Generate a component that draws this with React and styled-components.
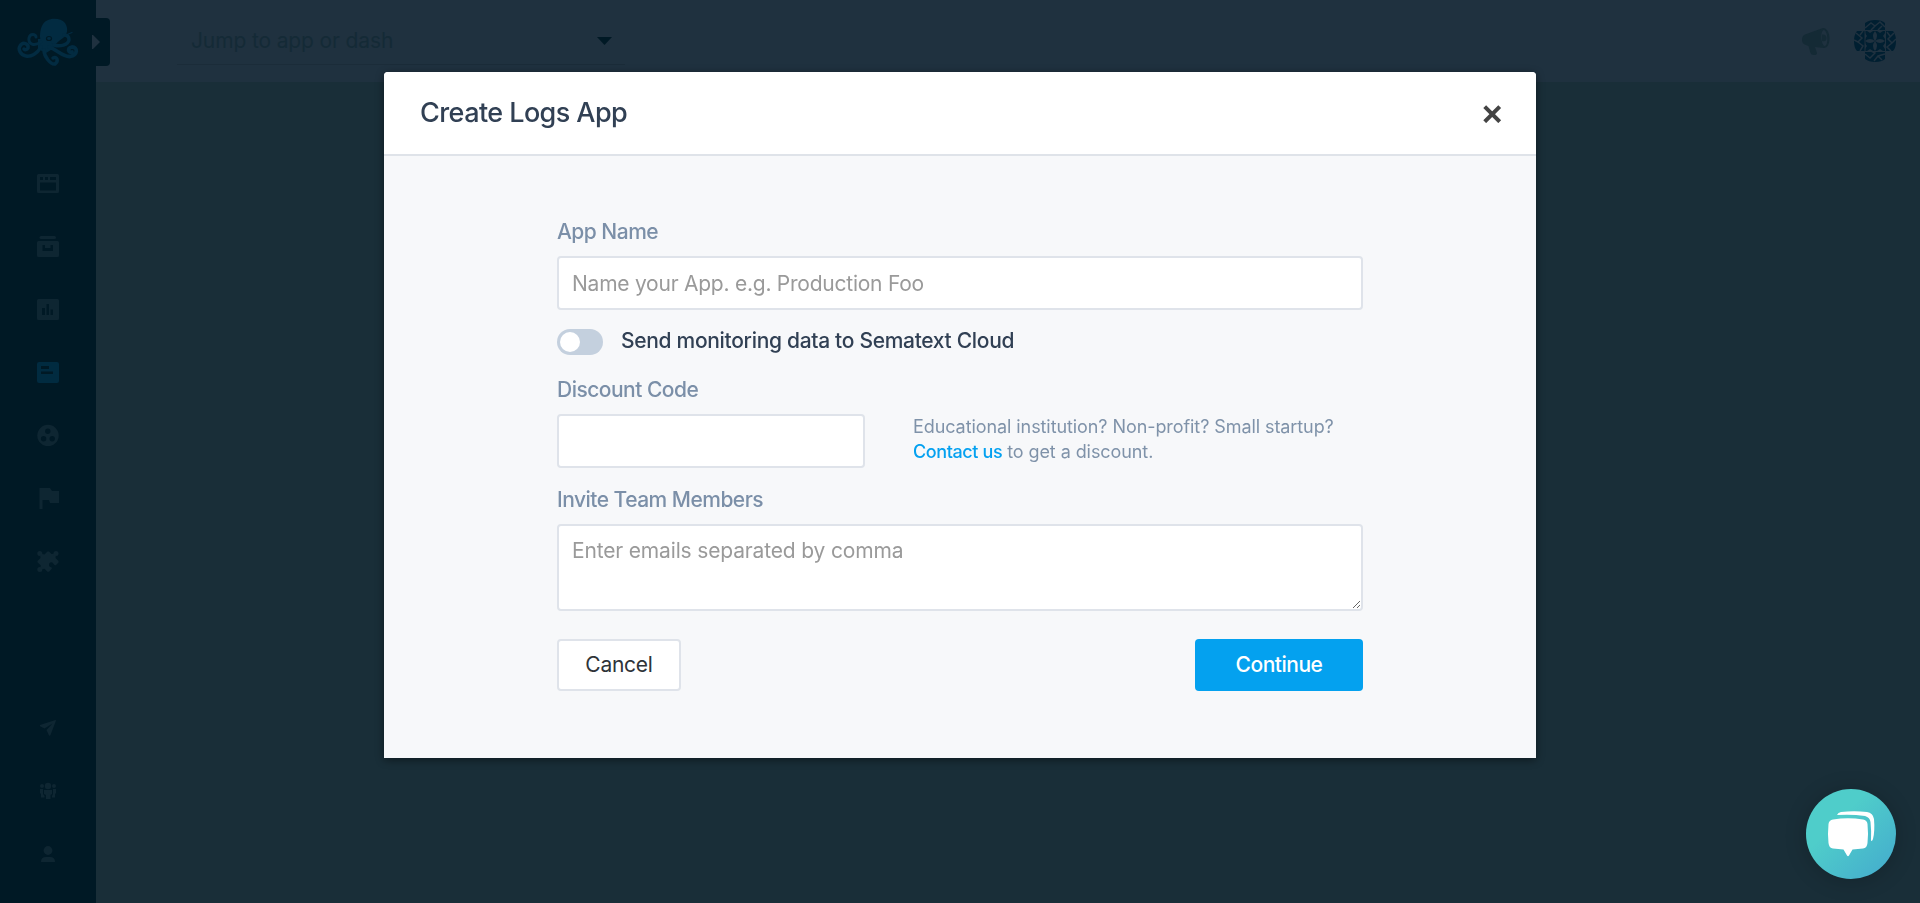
import React from "react";
import styled, { createGlobalStyle } from "styled-components";

const GlobalStyle = createGlobalStyle`
  *, *::before, *::after { box-sizing: border-box; }
  body {
    margin: 0;
    background: #192e38;
    font-family: Inter, "Liberation Sans", sans-serif;
    overflow: hidden;
  }
`;

const Page = styled.div`
  display: flex;
  width: 100%;
  height: 100vh;
  background: #192e38;
`;

const Sidebar = styled.nav`
  position: relative;
  display: flex;
  flex-direction: column;
  justify-content: space-between;
  width: 96px;
  flex: none;
  background: #001925;
`;

const Logo = styled.div`
  height: 84px;
  padding: 17px 0 0 16px;
  svg { display: block; }
`;

const Expander = styled.div`
  position: absolute;
  top: 18px;
  left: 88px;
  width: 22px;
  height: 48px;
  padding: 17px 0 0 4px;
  border-radius: 0 4px 4px 0;
  background: #001925;
  svg { display: block; }
`;

const NavGroup = styled.div`
  display: flex;
  flex-direction: column;
  align-items: center;
  gap: 41px;
  padding-top: ${(p) => p.$top || 0}px;
  padding-bottom: ${(p) => p.$bottom || 0}px;
`;

const NavIcon = styled.svg`
  display: block;
  width: 22px;
  height: 22px;
  color: ${(p) => (p.$active ? "#012b40" : "#0e2632")};
  fill: currentColor;
`;

const Main = styled.main`
  flex: 1;
`;

const TopBar = styled.header`
  display: flex;
  align-items: flex-start;
  justify-content: space-between;
  height: 82px;
  padding: 17px 24px 0 81px;
  background: #1f313f;
`;

const Search = styled.div`
  display: flex;
  align-items: center;
  justify-content: space-between;
  width: 448px;
  height: 48px;
  padding: 0 13px 0 14px;
  border-bottom: 1px solid #1b2c39;
  color: #142a36;
  font-size: 21px;
  letter-spacing: -0.13px;
`;

const TopActions = styled.div`
  display: flex;
  align-items: flex-start;
  gap: 24px;
  padding-top: 3px;
  svg { display: block; }
`;

const Backdrop = styled.div`
  position: fixed;
  inset: 0;
  display: flex;
  justify-content: center;
  align-items: flex-start;
  padding-top: 72px;
`;

const Modal = styled.section`
  width: 1152px;
  border-radius: 4px 4px 0 0;
  background: #f7f8fa;
  box-shadow: 0 2px 8px rgba(0, 0, 0, 0.45);
`;

const ModalHeader = styled.div`
  display: flex;
  align-items: center;
  justify-content: space-between;
  height: 84px;
  padding: 0 34px 0 36px;
  border-bottom: 2px solid #dfe3e9;
  border-radius: 4px 4px 0 0;
  background: #fff;
`;

const Title = styled.h1`
  margin: 0;
  color: #314054;
  font-size: 27px;
  font-weight: 500;
  line-height: 32px;
  letter-spacing: -0.57px;
`;

const CloseButton = styled.button`
  display: block;
  margin-top: 2px;
  padding: 0;
  border: 0;
  background: none;
  svg { display: block; }
`;

const Form = styled.form`
  padding: 61px 173px 67px;
`;

const Label = styled.label`
  display: block;
  height: 28px;
  margin-top: ${(p) => p.$top || 0}px;
  margin-bottom: 11px;
  color: #7b8fa8;
  font-size: 21px;
  font-weight: 500;
  line-height: 29px;
  letter-spacing: -0.52px;
`;

const Field = styled.input`
  display: block;
  width: ${(p) => p.$width || "100%"};
  height: 54px;
  padding: 0 13px;
  border: 2px solid #dfe3ea;
  border-radius: 4px;
  background: #fff;
  font-family: inherit;
  font-size: 21px;
  letter-spacing: -0.24px;
  &::placeholder { color: #9a9a9a; opacity: 1; }
`;

const TextArea = styled.textarea`
  display: block;
  width: 100%;
  height: 87px;
  padding: 11px 13px 9px;
  border: 2px solid #dfe3ea;
  border-radius: 4px;
  background: #fff;
  font-family: inherit;
  font-size: 21px;
  line-height: 28px;
  letter-spacing: -0.16px;
  resize: vertical;
  &::placeholder { color: #9a9a9a; opacity: 1; }
`;

const ToggleRow = styled.div`
  display: flex;
  align-items: center;
  gap: 18px;
  height: 26px;
  margin-top: 19px;
`;

const ToggleText = styled.span`
  padding-bottom: 2px;
  color: #314054;
  font-size: 21px;
  font-weight: 500;
  line-height: 26px;
  letter-spacing: -0.31px;
`;

const Switch = styled.span`
  width: 46px;
  height: 26px;
  padding: 3px;
  border-radius: 13px;
  background: #c4d0de;
  &::before {
    content: "";
    display: block;
    width: 20px;
    height: 20px;
    border-radius: 50%;
    background: #fff;
  }
`;

const DiscountRow = styled.div`
  display: flex;
  gap: 48px;
  height: 54px;
`;

const Hint = styled.p`
  margin: 0;
  color: #7f92a9;
  font-size: 18px;
  line-height: 25px;
  letter-spacing: -0.08px;
`;

const HintLink = styled.a`
  color: #04a1f0;
  font-weight: 500;
  letter-spacing: -0.4px;
`;

const Actions = styled.div`
  display: flex;
  justify-content: space-between;
  margin-top: 28px;
`;

const Button = styled.button`
  width: ${(p) => (p.$primary ? 168 : 124)}px;
  height: 52px;
  padding: 0 0 1px;
  border: ${(p) => (p.$primary ? "0" : "2px solid #dfe3ea")};
  border-radius: 4px;
  background: ${(p) => (p.$primary ? "#04a1ef" : "#fff")};
  color: ${(p) => (p.$primary ? "#fff" : "#2e3338")};
  font-family: inherit;
  font-size: 21px;
  font-weight: ${(p) => (p.$primary ? 500 : 400)};
  letter-spacing: ${(p) => (p.$primary ? -0.5 : -0.25)}px;
`;

const ChatLauncher = styled.button`
  position: fixed;
  right: 24px;
  bottom: 24px;
  display: flex;
  width: 90px;
  height: 90px;
  padding: 0;
  border: 0;
  border-radius: 50%;
  background: linear-gradient(135deg, #4fcdca 35%, #45afcd 90%);
  box-shadow: 0 2px 22px rgba(0, 0, 0, 0.2);
`;

const Octopus = () => (
  <svg width="66" height="52" viewBox="0 0 66 52" fill="none" stroke="#022b41" strokeLinecap="round" strokeLinejoin="round">
    <path fill="#022b41" stroke="none" d="M24 20C24 12 26 6 31 3.500C36 1 45 1 49 6C53 12 51 18 47 21C42 24 39 28 36 31C30 34 25 30 24 20Z" />
    <path fill="#022b41" stroke="none" d="M22 22L34 22L38 31L30 36L22 32Z" />
    <path strokeWidth="3.500" d="M25 30C21 37 15 40 10 39C4 38 2 32 4 29C7 24 13 27 12 31C11 33 9 33 8 32" />
    <path strokeWidth="3" d="M25 25C18 30 12 27 13 21C14 16 20 17 20 20" />
    <path strokeWidth="3.500" d="M28 33C28 40 35 48 39 47C43 44 41 39 37 41" />
    <path strokeWidth="3.800" d="M33 30C42 33 46 40 54 39.500C62 38 62 30 56 30C51 31 52 36 56 35" />
    <path strokeWidth="3.500" d="M38 28C44 30 52 28 53 23C53 19 51 18 48 18" />
    <path strokeWidth="1.300" d="M50 18L56 15.500" />
    <ellipse cx="33" cy="21.500" rx="2.500" ry="2" stroke="#001925" strokeWidth="1.200" />
  </svg>
);

const Megaphone = () => (
  <svg width="29" height="42" viewBox="0 0 29 42" fill="#142a35">
    <path d="M22 8C25 7.600 28.500 12 28.500 18C28.500 24 26.500 28 23 28L14 27L16 33Q16 35 13 35Q10 35 9.500 33L7.500 26L5 25Q1 24 1 20Q1 15.500 4 14.500Z" />
    <ellipse cx="23.300" cy="18" rx="3" ry="8" fill="#1f313f" transform="rotate(-4 23.300 18)" />
    <path d="M21 14.500Q25.500 14 25.500 18T21 21Z" />
  </svg>
);

const Avatar = () => (
  <svg width="42" height="42" viewBox="0 0 42 42">
    <path fill="#001f31" d="M11 3Q15 0 21 0Q28 0 31 3V11H39Q42 15 42 21Q42 28 39 31H31V39Q28 42 21 42Q15 42 11 39V31H3Q0 28 0 21Q0 15 3 11H11Z" />
    <g fill="none" stroke="#1f313f" strokeWidth="1.500">
      <path d="M11 10.500H31.500V31.500H11Z" strokeWidth="1" />
      <path d="M11 8L17 3L21 6L17 10M21 6L26 2L31 7M24 10L28 6" />
      <path d="M11 34L16 38L21 33L17 31M20 41L24 36L31 34M24 36L28 40" />
      <path d="M2 13L8 18L4 22L9 26L6 31M4 22L0 20M9 11L6 15" />
      <path d="M40 13L34 19L38 23L33 27L37 31M38 23L42 19M33 12L36 16" />
    </g>
    <g fill="#1f313f">
      <path d="M21 11Q25 16 21 21Q17 16 21 11ZM21 21Q25 26 21 31Q17 26 21 21ZM11 21Q16 17 21 21Q16 25 11 21ZM21 21Q26 17 31 21Q26 25 21 21Z" />
      <path d="M13 11H19L16 13ZM23 11H29L26 13ZM13 31H19L16 29ZM23 31H29L26 29ZM11 13V19L13 16ZM11 23V29L13 26ZM31 13V19L29 16ZM31 23V29L29 26Z" />
    </g>
  </svg>
);

export default function App() {
  return (
    <>
      <GlobalStyle />
      <Page>
        <Sidebar>
          <div>
            <Logo><Octopus /></Logo>
            <NavGroup $top={88}>
              <NavIcon viewBox="0 0 22 22">
                <path fillRule="evenodd" d="M1.500 2H20.500Q22 2 22 3.500V19.500Q22 21 20.500 21H1.500Q0 21 0 19.500V3.500Q0 2 1.500 2ZM3 5V8H6V5ZM8 5V8H11V5ZM13 5V8H19V5ZM3 10.500V18.500H19V10.500Z" />
              </NavIcon>
              <NavIcon viewBox="0 0 22 22">
                <rect x="2.500" y="1" width="16.500" height="3" rx="1.500" />
                <path fillRule="evenodd" d="M1.500 6H20.500Q22 6 22 7.500V20.500Q22 22 20.500 22H1.500Q0 22 0 20.500V7.500Q0 6 1.500 6ZM5.500 10V16H16V10H13.500V13H8V10Z" />
              </NavIcon>
              <NavIcon viewBox="0 0 22 22">
                <path fillRule="evenodd" d="M1.500 1H20.500Q22 1 22 2.500V20.500Q22 22 20.500 22H1.500Q0 22 0 20.500V2.500Q0 1 1.500 1ZM5 10V17H8V10ZM9.500 6V17H12V6ZM13.500 11.500V17H16V11.500Z" />
              </NavIcon>
              <NavIcon $active viewBox="0 0 22 22">
                <path fillRule="evenodd" d="M2 1H20Q22 1 22 3V20Q22 22 20 22H2Q0 22 0 20V3Q0 1 2 1ZM4 5V8H12V5ZM4 10.500V13H16V10.500Z" />
              </NavIcon>
              <NavIcon viewBox="0 0 22 22">
                <circle cx="11" cy="11.500" r="10.700" />
                <g fill="#001925">
                  <circle cx="10.800" cy="7.300" r="2.700" />
                  <circle cx="6.600" cy="14.700" r="2.700" />
                  <circle cx="15.200" cy="14.700" r="2.700" />
                </g>
              </NavIcon>
              <NavIcon viewBox="0 0 22 22">
                <path d="M2.500 1H13L15 4H22V16H13L12 13H5.500V22H2.500Z" />
              </NavIcon>
              <NavIcon viewBox="0 0 22 22">
                <path d="M3 3.500L7.500 4.500L10.500 1.500H12L14.500 4L19 3.500L18.500 8L21.500 11V12.500L18.800 15.200Q17.500 15.500 16.800 14.300Q16 12 13.800 12.300Q11.500 13 12 15.500Q12.500 17 14 17.200Q15.200 17.500 14.800 18.800L12 21.800H10.500L7.500 18.800L3 19.500L3.800 15.500L0.500 12.200V11L3.500 8Z" />
                <circle cx="2.800" cy="3.600" r="2.500" />
                <circle cx="19" cy="3.600" r="2.500" />
                <circle cx="2.800" cy="19.500" r="2.500" />
              </NavIcon>
            </NavGroup>
          </div>
          <NavGroup $bottom={39}>
            <NavIcon viewBox="0 0 22 22">
              <path d="M18.500 4L3 9Q2.500 10 3.500 10.500L7.500 12.500L15.500 7.500L9.500 14L12 19.500Q13 20 13.500 19L19 4.500Z" />
            </NavIcon>
            <NavIcon viewBox="0 0 22 22">
              <circle cx="11" cy="7" r="3.200" />
              <circle cx="5" cy="7" r="2" />
              <circle cx="17" cy="7" r="2" />
              <path d="M7 11H15V15L13.500 16V20H9V16L7 15ZM3 10H6V15L7.500 17V18.500H4V15L3 14ZM19 10H16V15L15 17V18.500H18V15L19 14Z" />
            </NavIcon>
            <NavIcon viewBox="0 0 22 22">
              <circle cx="11" cy="8.500" r="4.400" />
              <path d="M4 20Q4 15 9 15H13Q18 15 18 20Z" />
            </NavIcon>
          </NavGroup>
          <Expander>
            <svg width="8" height="14" viewBox="0 0 8 14" fill="#1f313f"><path d="M0 0H1L8 7L1 14H0Z" /></svg>
          </Expander>
        </Sidebar>
        <Main>
          <TopBar>
            <Search>
              Jump to app or dash
              <svg width="15" height="8" viewBox="0 0 15 8" fill="#001925"><path d="M0 0H15L7.500 8Z" /></svg>
            </Search>
            <TopActions>
              <Megaphone />
              <Avatar />
            </TopActions>
          </TopBar>
        </Main>
      </Page>
      <Backdrop>
        <Modal role="dialog" aria-label="Create Logs App">
          <ModalHeader>
            <Title>Create Logs App</Title>
            <CloseButton type="button" aria-label="Close">
              <svg width="19" height="18" viewBox="0 0 19 18" stroke="#444" strokeWidth="4" strokeLinecap="butt">
                <path d="M1.700 1.700L16.700 16.700M16.700 1.700L1.700 16.700" />
              </svg>
            </CloseButton>
          </ModalHeader>
          <Form>
            <Label htmlFor="name">App Name</Label>
            <Field id="name" placeholder="Name your App. e.g. Production Foo" />
            <ToggleRow>
              <Switch />
              <ToggleText>Send monitoring data to Sematext Cloud</ToggleText>
            </ToggleRow>
            <Label htmlFor="code" $top={20}>Discount Code</Label>
            <DiscountRow>
              <Field id="code" $width="308px" />
              <Hint>
                Educational institution? Non-profit? Small startup?
                <br />
                <HintLink>Contact us</HintLink> to get a discount.
              </Hint>
            </DiscountRow>
            <Label htmlFor="team" $top={17}>Invite Team Members</Label>
            <TextArea id="team" placeholder="Enter emails separated by comma" />
            <Actions>
              <Button type="button">Cancel</Button>
              <Button type="button" $primary>Continue</Button>
            </Actions>
          </Form>
        </Modal>
      </Backdrop>
      <ChatLauncher aria-label="Open chat">
        <svg width="90" height="90" viewBox="0 0 90 90" fill="#fff">
          <path d="M27 30.500Q42 28 57 30.500Q61 31 61.500 35Q62.500 44.500 61.500 54Q61 59 57 59.500L46.500 60.500L43 66.500Q42 68 41 66.500L37.500 60.500L27 59.500Q23 59 22.500 54Q21.500 44.500 22.500 35Q23 31 27 30.500Z" />
          <path d="M31 26Q32 23.500 35 23Q48 21.500 61 23Q67 24 68 30Q69 42 67 50Q66.500 52 65 52Q65.500 42 64.500 33Q64 28.500 59 27Q46 25 31 26Z" />
        </svg>
      </ChatLauncher>
    </>
  );
}
